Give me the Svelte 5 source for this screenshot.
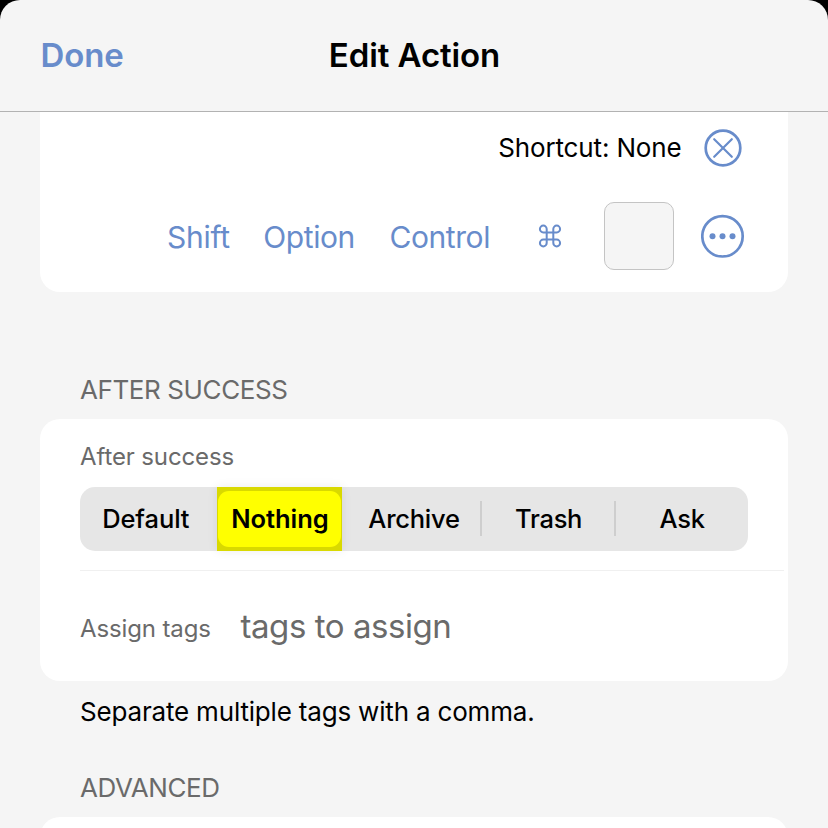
<script>
  const modifiers = ['Shift', 'Option', 'Control'];
  const outcomes = ['Default', 'Nothing', 'Archive', 'Trash', 'Ask'];
  let selected = $state('Nothing');
</script>

<div class="sheet">
  <header>
    <button class="done">Done</button>
    <h1>Edit Action</h1>
  </header>

  <section class="card shortcut">
    <div class="row current">
      <span class="label">Shortcut: None</span>
      <button class="icon clear" aria-label="Clear shortcut">
        <svg width="38" height="38" viewBox="0 0 38 38">
          <circle cx="19" cy="19" r="17.3" />
          <path d="M10.2 10.2 27.8 27.8M27.8 10.2 10.2 27.8" />
        </svg>
      </button>
    </div>
    <div class="row keys">
      {#each modifiers as name}
        <button class="key {name.toLowerCase()}">{name}</button>
      {/each}
      <button class="icon command" aria-label="Command">
        <svg width="24" height="24" viewBox="0 0 24 24">
          <path d="M8.7 8.4V5A3.4 3.4 0 1 0 5.3 8.4H18.7A3.4 3.4 0 1 0 15.3 5V19A3.4 3.4 0 1 0 18.7 15.6H5.3A3.4 3.4 0 1 0 8.7 19Z" />
        </svg>
      </button>
      <input class="keybox" aria-label="Key" />
      <button class="icon more" aria-label="More keys">
        <svg width="44" height="44" viewBox="0 0 44 44">
          <circle cx="21.5" cy="22.3" r="20.2" />
          <g class="dots">
            <circle cx="11.5" cy="22.3" r="3" />
            <circle cx="21.5" cy="22.3" r="3" />
            <circle cx="31.5" cy="22.3" r="3" />
          </g>
        </svg>
      </button>
    </div>
  </section>

  <h2 class="first">AFTER SUCCESS</h2>
  <section class="card after">
    <div class="caption success">After success</div>
    <div class="segments">
      {#each outcomes as name}
        <button class="segment" class:on={selected === name} onclick={() => (selected = name)}>
          <span class={name.toLowerCase()}>{name}</span>
        </button>
      {/each}
    </div>
    <div class="tags">
      <span class="caption assign">Assign tags</span>
      <span class="placeholder">tags to assign</span>
    </div>
  </section>
  <p class="note">Separate multiple tags with a comma.</p>

  <h2 class="second">ADVANCED</h2>
  <section class="card advanced"></section>
</div>

<style>
  :global(body) {
    background: #000;
    overflow: hidden;
  }
  .sheet {
    box-sizing: border-box;
    width: 828px;
    height: 828px;
    overflow: hidden;
    background: #f5f5f5;
    border-radius: 20px 20px 0 0;
    font-family: Inter, "Liberation Sans", sans-serif;
    color: #000;
  }
  button {
    border: 0;
    padding: 0;
    margin: 0;
    background: none;
    font: inherit;
    color: #688ccb;
    white-space: nowrap;
  }
  header {
    display: grid;
    grid-template-columns: 1fr auto 1fr;
    align-items: center;
    box-sizing: border-box;
    height: 112px;
    padding-bottom: 2px;
    border-bottom: 1px solid #b2b2b2;
  }
  .done {
    justify-self: start;
    margin-left: 40.5px;
    font-size: 33px;
    font-weight: 600;
    line-height: 40px;
    letter-spacing: -0.1px;
  }
  h1 {
    margin: 0 0 0 1px;
    font-size: 33px;
    font-weight: 600;
    line-height: 40px;
    letter-spacing: -0.1px;
    white-space: nowrap;
  }
  .card {
    margin: 0 40px;
    background: #fff;
    border-radius: 20px;
  }
  .shortcut {
    height: 180px;
    border-radius: 0 0 20px 20px;
  }
  .row {
    display: flex;
    align-items: center;
    justify-content: flex-end;
  }
  .current {
    height: 72px;
    padding-right: 46px;
    gap: 22.5px;
  }
  .label {
    font-size: 26px;
    line-height: 32px;
    letter-spacing: -0.15px;
  }
  .icon {
    display: block;
    line-height: 0;
  }
  svg {
    display: block;
    fill: none;
    stroke: #688ccb;
    stroke-width: 2.7;
    stroke-linecap: round;
  }
  .clear path {
    stroke-width: 2.2;
  }
  .command svg {
    stroke-width: 2;
  }
  .dots {
    fill: #688ccb;
    stroke: none;
  }
  .keys {
    height: 104px;
    padding-right: 43px;
  }
  .key {
    font-size: 30px;
    line-height: 36px;
    padding-top: 1px;
    letter-spacing: -0.42px;
    margin-right: 34.5px;
  }
  .shift {
    letter-spacing: -0.25px;
    margin-right: 33.5px;
  }
  .command {
    margin: 0 42px 0 13.5px;
  }
  .keybox {
    box-sizing: border-box;
    width: 70px;
    height: 68px;
    margin: 0 27px 0 0;
    padding: 0 12px;
    border: 1px solid #c4c4c4;
    border-radius: 10px;
    background: #f5f5f5;
    font: inherit;
  }
  h2 {
    margin: 0 80px;
    font-size: 26px;
    font-weight: 400;
    line-height: 32px;
    letter-spacing: -0.4px;
    color: #6a6a6a;
  }
  .first {
    padding: 82px 0 13px;
  }
  .after {
    height: 262px;
    padding-left: 40px;
    box-sizing: border-box;
  }
  .caption {
    font-size: 24px;
    line-height: 30px;
    letter-spacing: -0.12px;
    color: #6a6a6a;
  }
  .success {
    padding: 23px 0 15px;
  }
  .segments {
    display: grid;
    grid-template-columns: repeat(5, 1fr);
    width: 668px;
    height: 64px;
    border-radius: 15px;
    background: #e6e6e6;
  }
  .segment {
    position: relative;
    padding-bottom: 1px;
    color: #000;
    font-size: 25.5px;
    font-weight: 500;
    letter-spacing: -0.25px;
  }
  .segment span {
    position: relative;
  }
  .segment .default {
    letter-spacing: -0.1px;
    right: 1px;
  }
  .segment .trash,
  .segment .ask {
    left: 1px;
  }
  .segment:nth-child(n + 4)::before {
    content: "";
    position: absolute;
    left: -1px;
    top: 14px;
    width: 2px;
    height: 35px;
    background: #cecece;
  }
  .segment:nth-child(5)::before {
    left: 0;
  }
  .on {
    font-weight: 600;
    letter-spacing: -0.05px;
    margin: 0 5px 0 3px;
    background: #d9d900;
    box-shadow: 0 0 10px rgb(0 0 0 / 8%);
  }
  .on span {
    left: 0.5px;
  }
  .on::before {
    content: "";
    position: absolute;
    inset: 4px 1px;
    border-radius: 11px;
    background: #ff0;
  }
  .tags {
    display: flex;
    align-items: baseline;
    height: 110px;
    margin: 19px 4px 0 0;
    border-top: 1px solid #f0f0f0;
    line-height: 110px;
  }
  .assign {
    width: 160.5px;
    position: relative;
    top: -1px;
  }
  .placeholder {
    font-size: 33px;
    letter-spacing: -0.44px;
    color: #6a6a6a;
  }
  .note {
    margin: 0 80px;
    padding: 15px 0 28px;
    font-size: 26px;
    line-height: 32px;
    letter-spacing: -0.18px;
    white-space: nowrap;
  }
  .second {
    padding: 16px 0 13px;
  }
  .advanced {
    height: 60px;
  }
</style>
